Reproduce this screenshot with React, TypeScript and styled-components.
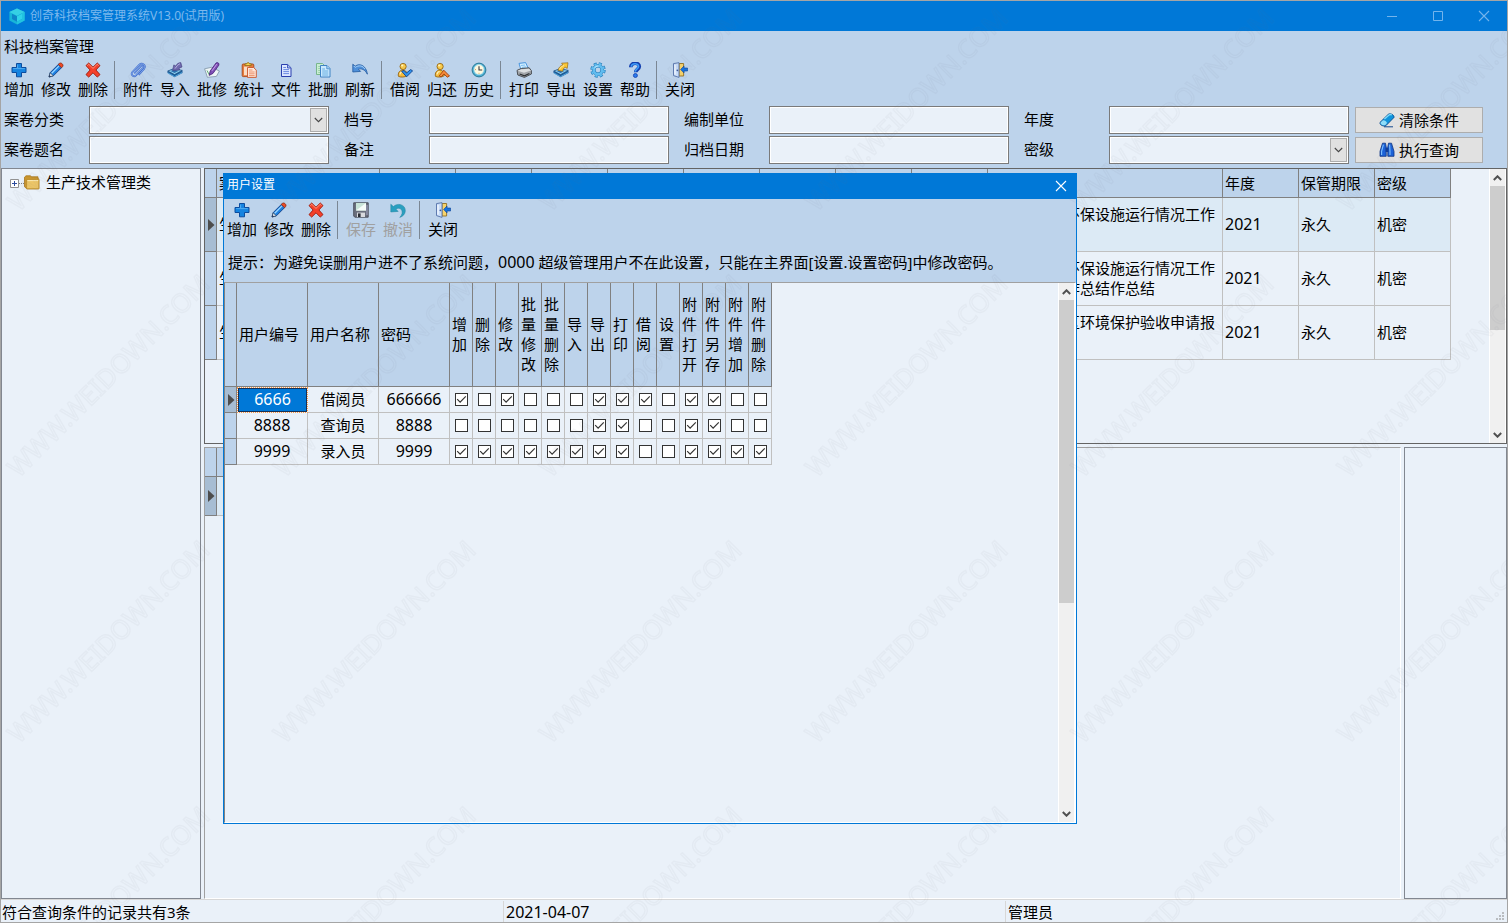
import React, { useId, useState } from "react";
import styled, { createGlobalStyle, css } from "styled-components";

const GlobalStyle = createGlobalStyle`
  *, *::before, *::after { box-sizing: border-box; }
  body { margin: 0; background: #eaf1f9; }
  body, button, input, select {
    font-family: "Noto Sans", "Noto Sans CJK SC", sans-serif;
    font-size: 15px;
    line-height: 20px;
    color: #000;
  }
`;

const color = {
  blue: "#0078d7",
  band: "#bdd3eb",
  panel: "#eaf1f9",
  line: "#808080",
  softLine: "#c0c0c0",
  current: "#dceaf5",
  currentHead: "#a7bdd3",
};

/* ---------- window frame ---------- */

const Window = styled.div`
  position: relative;
  display: flex;
  flex-direction: column;
  min-height: 100vh;
  border: 1px solid #a5a5a5;
  background: ${color.panel};
  overflow: hidden;
`;

const TitleBar = styled.header`
  display: flex;
  align-items: center;
  height: 30px;
  padding-left: 8px;
  gap: 5px;
  background: ${color.blue};
`;

const Title = styled.h1`
  flex: 1;
  margin: 0;
  font-size: 12px;
  font-weight: 400;
  line-height: 20px;
  color: #7db9ed;
`;

const CaptionButtons = styled.div`
  display: flex;
`;

const CaptionButton = styled.button<{ $bright?: boolean }>`
  display: flex;
  align-items: center;
  justify-content: center;
  width: ${(p) => (p.$bright ? "30px" : "46px")};
  height: 24px;
  padding: 0;
  border: 0;
  background: none;
  color: ${(p) => (p.$bright ? "#fff" : "#73b4ec")};
`;

const Band = styled.div`
  background: ${color.band};
`;

const MenuLine = styled.div`
  padding: 5px 3px 3px;
`;

/* ---------- tool bar ---------- */

const ToolBar = styled.div`
  display: flex;
  height: 42px;
`;

const ToolButton = styled.button`
  display: flex;
  flex-direction: column;
  align-items: center;
  gap: 1px;
  width: 37px;
  padding: 3px 1px 0 0;
  border: 0;
  background: none;
  white-space: nowrap;

  &:disabled {
    color: #a0a0a0;
  }
`;

const ToolSeparator = styled.div`
  width: 8px;
  flex: none;

  &::before {
    content: "";
    display: block;
    width: 1px;
    height: 38px;
    margin: 2px 0 0 2px;
    background: #7b8794;
  }
`;

/* ---------- query form ---------- */

const QueryForm = styled.form`
  display: flex;
  gap: 6px;
  padding: 5px 24px 4px 3px;
`;

const FieldGrid = styled.div`
  flex: 1;
  display: grid;
  grid-template-columns: repeat(4, minmax(0, 1fr));
  column-gap: 15px;
  row-gap: 2px;
`;

const Field = styled.div`
  display: flex;
  align-items: center;
`;

const FieldLabel = styled.label`
  flex: none;
  width: 85px;
  padding-bottom: 2px;
`;

const boxStyle = css`
  width: 100%;
  min-width: 0;
  height: 28px;
  padding: 0 4px;
  border: 1px solid #7a7a7a;
  border-radius: 0;
  background: ${color.panel};
  box-shadow: inset 0 0 0 1px #fff;
  outline: none;
`;

const TextBox = styled.input`
  ${boxStyle}
`;

const SelectFrame = styled.div`
  position: relative;
  flex: 1;
  min-width: 0;
  display: flex;
`;

const SelectBox = styled.select`
  ${boxStyle}
  appearance: none;
`;

const DropMark = styled.span`
  position: absolute;
  top: 2px;
  right: 2px;
  display: flex;
  align-items: center;
  justify-content: center;
  width: 17px;
  height: 24px;
  border: 1px solid #adadad;
  background: #e1e1e1;
  pointer-events: none;
`;

const FormButtons = styled.div`
  display: flex;
  flex-direction: column;
  gap: 4px;
  padding-top: 1px;
`;

const FormButton = styled.button`
  display: flex;
  align-items: center;
  justify-content: center;
  gap: 4px;
  width: 128px;
  height: 26px;
  padding: 0;
  border: 1px solid #adadad;
  background: #e1e1e1;
`;

/* ---------- work area ---------- */

const Work = styled.main`
  flex: 1;
  display: grid;
  grid-template-columns: 200px minmax(0, 1fr);
  gap: 3px;
`;

const TreePanel = styled.nav`
  padding: 3px 8px;
  border: 1px solid #828790;
`;

const TreeItem = styled.div`
  display: flex;
  align-items: center;
`;

const TreeLabel = styled.span`
  padding: 0 0 2px 6px;
`;

const Expander = styled.button`
  width: 9px;
  height: 9px;
  padding: 0;
  border: 0;
  background: none;
  display: flex;
`;

const Dots = styled.span`
  width: 5px;
  border-top: 1px dotted #808080;
`;

const Right = styled.div`
  display: flex;
  flex-direction: column;
  gap: 3px;
`;

const RecordPanel = styled.section`
  display: flex;
  height: 276px;
  border: 1px solid #646464;
`;

const LowerRow = styled.div`
  flex: 1;
  display: flex;
  gap: 3px;
`;

const DetailPanel = styled.section`
  flex: 1;
  min-width: 0;
  overflow: hidden;
  border: 1px solid #fff;
  border-top-color: #a0a0a0;
  border-left-color: #a0a0a0;
`;

const PreviewPanel = styled.aside`
  width: 103px;
  border: 1px solid #828790;
`;

const GridScroll = styled.div`
  flex: 1;
  min-width: 0;
  overflow: hidden;
`;

/* ---------- data grids ---------- */

const DataGrid = styled.table<{ $width: number }>`
  width: ${(p) => p.$width}px;
  table-layout: fixed;
  border-collapse: separate;
  border-spacing: 0;
`;

const HeadCell = styled.th<{ $height: number }>`
  height: ${(p) => p.$height}px;
  padding: 0 0 1px 2px;
  border-right: 1px solid ${color.line};
  border-bottom: 1px solid ${color.line};
  background: ${color.band};
  font-weight: 400;
  text-align: left;
  overflow: hidden;
`;

const MarkCell = styled.th<{ $current?: boolean }>`
  padding: 0 1px 0 0;
  border-right: 1px solid ${color.line};
  border-bottom: 1px solid ${color.line};
  background: ${(p) => (p.$current ? color.currentHead : color.band)};
  text-align: right;
  line-height: 0;
`;

const Cell = styled.td<{
  $height: number;
  $center?: boolean;
  $numeric?: boolean;
  $current?: boolean;
  $selected?: boolean;
}>`
  height: ${(p) => p.$height}px;
  padding: ${(p) => (p.$center ? "0 0 2px" : "0 0 2px 2px")};
  border-right: 1px solid ${color.softLine};
  border-bottom: 1px solid ${color.softLine};
  background: ${(p) => (p.$current ? color.current : color.panel)};
  text-align: ${(p) => (p.$center ? "center" : "left")};
  font-size: ${(p) => (p.$numeric ? "16px" : "15px")};
  ${(p) =>
    p.$selected &&
    css`
      background: ${color.blue};
      color: #fff;
      border: 1px dotted #ff9a45;
      background-clip: padding-box;
      background-color: ${color.blue};
      box-shadow: inset 0 0 0 1px #15325a;
    `}
`;

const TickCell = styled.td`
  height: 26px;
  padding: 0 0 0 5px;
  border-right: 1px solid ${color.softLine};
  border-bottom: 1px solid ${color.softLine};
`;

const Stacked = styled.span`
  display: block;
  width: 15px;
  word-break: break-all;
`;

const Tick = styled.input`
  appearance: none;
  display: block;
  width: 13px;
  height: 13px;
  margin: 0;
  border: 1px solid #333;
  background: #fff center / 11px 11px no-repeat;

  &:checked {
    background-image: url("data:image/svg+xml,%3Csvg xmlns='http://www.w3.org/2000/svg' viewBox='0 0 11 11'%3E%3Cpath d='M1.2 5.2L4.1 8.1L9.8 2.4' fill='none' stroke='%23333' stroke-width='1.2'/%3E%3C/svg%3E");
  }
`;

/* ---------- scroll bar ---------- */

const ScrollTrack = styled.div`
  display: flex;
  flex-direction: column;
  flex: none;
  width: 17px;
  border-left: 1px solid #fff;
  border-right: 1px solid #fff;
  background: #f0f0f0;
`;

const ScrollButton = styled.button`
  display: flex;
  align-items: center;
  justify-content: center;
  height: 17px;
  padding: 0;
  border: 0;
  background: none;
`;

const ScrollLane = styled.div`
  flex: 1;
`;

const ScrollThumb = styled.div`
  height: 60%;
  background: #cdcdcd;
`;

/* ---------- dialog ---------- */

const Dialog = styled.div`
  position: absolute;
  top: 172px;
  left: 222px;
  display: flex;
  flex-direction: column;
  width: 854px;
  border: 1px solid ${color.blue};
  background: ${color.band};
`;

const DialogTitle = styled.div`
  display: flex;
  align-items: flex-start;
  justify-content: space-between;
  height: 25px;
  padding-left: 3px;
  background: ${color.blue};
  color: #fff;
`;

const DialogName = styled.h2`
  margin: 0;
  font-size: 12px;
  font-weight: 400;
  line-height: 22px;
`;

const Hint = styled.p`
  margin: 0;
  padding: 11px 4px 10px;
`;

const Digits = styled.span`
  font-size: 16px;
`;

const DialogBody = styled.div`
  display: flex;
  height: 541px;
  border: 1px solid #fff;
  border-top-color: #a0a0a0;
  border-left-color: #828282;
  background: ${color.panel};
`;

/* ---------- status bar ---------- */

const StatusBar = styled.footer`
  display: grid;
  grid-template-columns: repeat(3, minmax(0, 1fr));
  height: 23px;
  padding-top: 1px;
  border-top: 1px solid #d7d7d7;
  background: ${color.panel};
`;

const StatusCell = styled.div<{ $numeric?: boolean }>`
  display: flex;
  justify-content: space-between;
  align-items: flex-start;
  padding: 1px 0 0 2px;
  border-left: 1px solid #d7d7d7;
  font-size: ${(p) => (p.$numeric ? "16px" : "15px")};

  &:first-child {
    padding-left: 1px;
    border-left: 0;
  }
`;

const WatermarkLayer = styled.svg`
  position: absolute;
  inset: 0;
  width: 100%;
  height: 100%;
  pointer-events: none;
`;

/* ---------- icons ---------- */

type IconName =
  | "add" | "edit" | "remove" | "clip" | "import" | "batchEdit" | "stats" | "file"
  | "batchRemove" | "refresh" | "lend" | "giveBack" | "history" | "print" | "export"
  | "settings" | "help" | "exit" | "save" | "undo" | "eraser" | "find" | "folder";

const Tray = () => (
  <>
    <path d="M.5 9L7 6.5L15.5 8.5V11L7.5 15.2L.5 11Z" fill="#1d5f9c" />
    <path d="M.8 9L7 6.6L15.2 8.4L7.6 12.6Z" fill="#8fd0ee" stroke="#1c4c82" strokeWidth=".7" />
    <path d="M3.5 9.1L7 7.8L11.8 8.8L7.6 11Z" fill="#2c6fae" />
    <path d="M1 11L7.6 14.6L15 10.6" fill="none" stroke="#5fb4e6" strokeWidth=".8" />
  </>
);

const Person = () => (
  <>
    <path d="M1.5 14.4C.6 11 2.6 8.3 5.6 8.1C8.8 8 10.6 10.8 10.2 13.8C8 15.3 3.6 15.4 1.5 14.4Z" fill="#f5bb3c" stroke="#96650f" strokeWidth=".9" />
    <path d="M3 12.5C3.2 10.8 4.2 9.7 5.6 9.5" stroke="#fff0b8" strokeWidth="1.1" fill="none" />
    <circle cx="6.1" cy="4.5" r="3.1" fill="#f9cb4c" stroke="#96650f" strokeWidth=".9" />
    <circle cx="5.2" cy="3.5" r="1.1" fill="#fff3c0" />
  </>
);

const icons: Record<IconName, React.ReactNode> = {
  add: (
    <>
      <path d="M5.5 1.5H10.5V5.5H15V10.5H10.5V14.8H5.5V10.5H1V5.5H5.5Z" fill="#1583e0" stroke="#0c4c9e" />
      <path d="M6.6 2.6V6.6H2.2M6.6 6.6H13.8" fill="none" stroke="#4fadf2" strokeWidth="1" />
    </>
  ),
  edit: (
    <>
      <path d="M1 15L2.2 10.6L10.8 2L14 5.2L5.4 13.8Z" fill="#1d7fe0" stroke="#123f86" strokeWidth=".9" />
      <path d="M3.2 10.8L10.6 3.4L11.5 4.3L4.2 11.7Z" fill="#9bd6ff" />
      <path d="M10.3 2.5L11.9 1C13.4 .6 15.4 2.4 15 4.1L13.5 5.7Z" fill="#ef4a23" stroke="#93270f" strokeWidth=".8" />
      <path d="M1 15L2.2 10.8L5.2 13.8Z" fill="#e9eef6" stroke="#345" strokeWidth=".7" />
      <path d="M1 15L1.5 13L3 14.4Z" fill="#1b2c52" />
    </>
  ),
  remove: (
    <>
      <path d="M1 3.6L3.7 1L8 5.2L12.3 1L15 3.6L10.9 8L15 12.6L12.3 15.1L8 10.8L3.7 15.1L1 12.6L5.1 8Z" fill="#f4402a" stroke="#9c1708" strokeWidth=".9" />
      <path d="M2.3 3.6L3.8 2.3L8 6.4L12.2 2.3L13.7 3.5" fill="none" stroke="#ffa58d" strokeWidth=".8" />
    </>
  ),
  clip: (
    <>
      <path d="M4.2 11.4L10.8 4.3C12.2 2.9 14 4.5 12.8 6L6 13.3C3.8 15.5 .3 12.8 2.4 10L9.2 2.8C12 .2 16.4 3 14.2 6.6L8.6 12.8" fill="none" stroke="#3f6fd0" strokeWidth="1.8" />
      <path d="M4.2 11.4L10.8 4.3C12.2 2.9 14 4.5 12.8 6L6 13.3C3.8 15.5 .3 12.8 2.4 10L9.2 2.8C12 .2 16.4 3 14.2 6.6L8.6 12.8" fill="none" stroke="#a8c4f6" strokeWidth=".6" />
    </>
  ),
  import: (
    <>
      <Tray />
      <path d="M13.8 .6L15 5L12 6.2L12.6 8L5.6 8.4L6.8 2.9L8.8 4.1C9.6 2 11.4 .8 13.8 .6Z" fill="#6f69ad" stroke="#413d7a" strokeWidth=".6" />
      <path d="M8 6.6L10.6 3.2L13 1.7" stroke="#b5b0de" fill="none" />
    </>
  ),
  batchEdit: (
    <>
      <path d="M.6 6.8L7.6 5.3L15.4 9L12.4 14.4L3.4 15.3Z" fill="#eef5f7" stroke="#7d93a4" strokeWidth=".8" />
      <path d="M3 8.5L5.2 12.6L7 9.4" fill="none" stroke="#61b273" strokeWidth="1" />
      <path d="M5.2 13.4L6.2 9L12 1C13.6 -.1 15.6 1.3 14.8 3.2L9 11.4Z" fill="#7f4fb6" stroke="#492379" strokeWidth=".8" />
      <path d="M8 8.8L12.8 2.2" stroke="#c9a3ea" />
    </>
  ),
  stats: (
    <>
      <rect x="1.2" y="2" width="11.6" height="12.6" rx="1" fill="#e87d3d" stroke="#a8481a" strokeWidth=".9" />
      <path d="M4 3.6V1.8H5.8C6 .2 8.2 .2 8.4 1.8H10.2V3.6Z" fill="#f8d451" stroke="#8c6611" strokeWidth=".8" />
      <rect x="3" y="4.6" width="5" height="8.6" fill="#fbdcc4" />
      <path d="M6.5 5.5H12.6L15.3 8.2V15.4H6.5Z" fill="#ffe6d8" stroke="#c9552a" strokeWidth=".9" />
      <path d="M8 8H11.5M8 10H13.6M8 11.8H13.6M8 13.6H13.6" stroke="#ea8a63" strokeWidth=".9" />
    </>
  ),
  file: (
    <>
      <path d="M3.5 2.5H9.7L13 5.8V14.5H3.5Z" fill="#dbe6ff" stroke="#2a3fae" />
      <path d="M9.5 2.8V6H12.8" fill="#a9bff5" stroke="#2a3fae" strokeWidth=".8" />
      <path d="M5.3 5.5H8M5.3 7.6H11M5.3 9.6H11M5.3 11.6H11" stroke="#6c8ae2" />
    </>
  ),
  batchRemove: (
    <>
      <path d="M1.5 1.5H7.5L10.3 4.3V12.5H1.5Z" fill="#c9edd3" stroke="#78b68c" />
      <path d="M3.2 4.5H5.4M3.2 6.5H5.4M3.2 8.5H5.4M3.2 10.5H5.4" stroke="#9ad0a9" />
      <path d="M5.5 3.5H12L15 6.5V15H5.5Z" fill="#cbe9ff" stroke="#3f83c4" />
      <path d="M11.8 3.8V6.8H14.8" fill="#a6d4f6" stroke="#3f83c4" strokeWidth=".8" />
      <path d="M7.2 7H10M7.2 9H13.3M7.2 11H13.3M7.2 13H13.3" stroke="#67aee0" />
    </>
  ),
  refresh: (
    <>
      <path d="M.8 2.2L3.2 4.2C7.4 .8 14.2 3.2 15.4 12.2C12.8 7.4 9.4 6.2 6.4 7.2L8.6 9.4L.8 10Z" fill="#4f90da" stroke="#235a9f" strokeWidth=".8" />
      <path d="M1.8 4L3.2 5.4C6.5 2.9 11 3.6 13 7" stroke="#a7d1f8" fill="none" />
    </>
  ),
  lend: (
    <>
      <Person />
      <path d="M4.6 9.3L7 8.5L9.5 11L13.6 7.6L15.6 8.8L9.6 14.8Z" fill="#2e93ef" stroke="#0c418f" strokeWidth=".9" />
    </>
  ),
  giveBack: (
    <>
      <Person />
      <path d="M5.2 13.8L9.8 8.2L15.5 14L13.3 15.2L9.9 11.9L7.2 15Z" fill="#f78b3a" stroke="#9f400d" strokeWidth=".9" />
    </>
  ),
  history: (
    <>
      <circle cx="8" cy="8" r="6.9" fill="#4eafd2" stroke="#257391" strokeWidth=".9" />
      <circle cx="8" cy="7.6" r="5" fill="#fff9df" stroke="#a5dced" strokeWidth=".8" />
      <path d="M8 4.2V8H11.2" stroke="#38383c" strokeWidth="1.1" fill="none" />
      <path d="M4.2 7.6H5M7.6 11.3H8.4" stroke="#c69440" />
    </>
  ),
  print: (
    <>
      <path d="M3 1.4L9.6 .6L12.5 6.8L5 8Z" fill="#d4efff" stroke="#3b8cdb" strokeWidth=".9" />
      <path d="M5 3.5L9 3M6 5.4L10.2 4.8" stroke="#7fc2f4" />
      <path d="M1 8.4L5.2 6.5L13.2 5.8L15.4 8.7V12L8.4 15.4L1.8 13Z" fill="#a2a6aa" stroke="#3f4347" strokeWidth=".9" />
      <path d="M1.5 8.7L8 10.8L15 8.6L12.8 6.8L5.4 7.3Z" fill="#dcdfe1" />
      <path d="M3.6 12L8.4 13.8L13.4 11.5" stroke="#2b2e31" strokeWidth="1.2" fill="none" />
    </>
  ),
  export: (
    <>
      <Tray />
      <path d="M8.6 1.2L15 .8L14.2 6.4L12.2 5.2C10.6 6 10 7.4 9.6 9.2L5 8.4C5.6 5.6 7.6 3.4 9.9 2.9Z" fill="#fbc736" stroke="#966814" strokeWidth=".7" />
      <path d="M6.6 7.4C7.4 5.2 9 4.2 11 3.6" stroke="#ffeaa0" fill="none" />
    </>
  ),
  settings: (
    <>
      <circle cx="8" cy="8" r="6.2" fill="none" stroke="#2a7fb9" strokeWidth="3" strokeDasharray="2.9 1.97" />
      <circle cx="8" cy="8" r="4.2" fill="none" stroke="#2a7fb9" strokeWidth="3.6" />
      <circle cx="8" cy="8" r="4.2" fill="none" stroke="#62bdf0" strokeWidth="2.6" />
      <circle cx="8" cy="8" r="6" fill="none" stroke="#62bdf0" strokeWidth="2" strokeDasharray="2.1 2.61" strokeDashoffset="-.4" />
      <path d="M4.3 6.4C5 4.8 6.6 3.9 8.4 4" fill="none" stroke="#c3e9fc" />
    </>
  ),
  help: (
    <>
      <path d="M3.8 5.3C3.6 -.1 12.5 .1 12.3 4.6C12.2 7.2 8.7 7.4 8.7 10.3" fill="none" stroke="#123eae" strokeWidth="3.6" />
      <path d="M4.3 4.7C4.5 .8 11.7 .9 11.6 4.6C11.5 6.9 8.2 7 8.2 9.8" fill="none" stroke="#3f9cf8" strokeWidth="1.6" />
      <circle cx="8.4" cy="13.5" r="2" fill="#2a7bec" stroke="#123eae" strokeWidth=".8" />
    </>
  ),
  exit: (
    <>
      <path d="M7 1.5H11.6V14H7Z" fill="#f7d36b" stroke="#94711f" strokeWidth=".9" />
      <path d="M1.5 1.6L7 .7V15.4L1.5 13.6Z" fill="#c8dcf8" stroke="#5470a8" strokeWidth=".9" />
      <path d="M3 3V12.6" stroke="#fff" />
      <circle cx="5.4" cy="8.3" r=".9" fill="#3d5a96" />
      <path d="M8.6 7.4L12 4V6H15.6V9H12V10.9Z" fill="#1673df" stroke="#0b4194" strokeWidth=".6" />
    </>
  ),
  save: (
    <>
      <path d="M.7 .8H15.2V15.2H1.8L.7 14Z" fill="#6a6f7d" stroke="#474b57" strokeWidth=".9" />
      <rect x="3" y="1" width="10" height="7.6" fill="#c9e4d8" />
      <path d="M3 8.4L13 1V8.6H3Z" fill="#f7fcf9" />
      <rect x="4" y="10.6" width="8" height="4.4" fill="#d8dade" />
      <rect x="5" y="11.4" width="2.6" height="3.6" fill="#292c34" />
      <path d="M14 3V13" stroke="#a4a7c4" />
    </>
  ),
  undo: (
    <path d="M.8 2.2L3.4 4.6C7 .6 15.6 2 15.3 9C15.2 12 13 14.4 9.8 15.4C12.2 12.6 12.6 10.4 11.8 8.4C10.8 6.2 8 5.6 6 7.2L8.2 9.4L.8 10Z" fill="#2a9fc0" stroke="#23859f" strokeWidth=".5" />
  ),
  eraser: (
    <>
      <path d="M5 14.8H14" stroke="#15498d" />
      <path d="M1 10.4L9.2 2.4C10.8 .9 15.4 2.6 15 5.4L7 13.6C4.8 14.9 .4 13 1 10.4Z" fill="#0f93dc" stroke="#0c4a8a" strokeWidth=".9" />
      <path d="M1.6 10.4L4 8.2C5.6 8 7.6 9.4 8 11L6.4 13C4.6 14.1 1.2 12.6 1.6 10.4Z" fill="#8fdcf8" />
      <path d="M5.4 6.9L10 2.9C10.8 2.3 12 2.5 12.8 3" stroke="#7fdcfb" strokeWidth="1.3" fill="none" />
    </>
  ),
  find: (
    <>
      <path d="M3.5 1.2H6.5L7.2 5V14.3H1V9.4Z" fill="#1c62d8" stroke="#0c3482" strokeWidth=".8" />
      <path d="M9.5 1.2H12.5L15 9.4V14.3H8.8V5Z" fill="#1c62d8" stroke="#0c3482" strokeWidth=".8" />
      <rect x="6.6" y="5.6" width="2.8" height="4.4" fill="#0d3c99" />
      <path d="M4.4 2.6L2.6 9.4V13M10.6 2.6L11 9.4V13" stroke="#7fc2ff" strokeWidth="1.1" fill="none" />
    </>
  ),
  folder: (
    <>
      <path d="M.5 2.2V11.8L3 13.8H14.8V3.8H14V1.8H7.5L6.5 .8H2Z" fill="#c9962f" stroke="#a9761c" strokeWidth=".8" />
      <path d="M2.6 4.6H14.9V13.8H2.6Z" fill="#ecc566" stroke="#b98b2b" strokeWidth=".8" />
      <path d="M3.4 5.6H14.2" stroke="#fbeab4" />
    </>
  ),
};

const IconSvg = styled.svg`
  display: block;
  flex: none;
`;

const Icon = ({ name }: { name: IconName }) => (
  <IconSvg width="16" height="16" viewBox="0 0 16 16" aria-hidden="true">
    {icons[name]}
  </IconSvg>
);

const Logo = () => (
  <IconSvg width="16" height="17" viewBox="0 0 16 17" aria-hidden="true">
    <path d="M8 .4L15.6 4.1V12.6L8 16.6L.4 12.6V4.1Z" fill="#18b4d8" />
    <path d="M8 .4L15.6 4.1L8 7.8L.4 4.1Z" fill="#35d0e4" />
    <path d="M8 7.8L15.6 4.1V12.6L8 16.6Z" fill="#22c3e0" />
    <path d="M3 5.7L8 8.2L13 5.7V11L8 13.8L3 11Z" fill="#0e86c8" />
    <path d="M8 8.2L13 5.7V11L8 13.8Z" fill="#2fd3ea" />
  </IconSvg>
);

const Cross = () => (
  <IconSvg width="12" height="12" viewBox="0 0 12 12" aria-hidden="true">
    <path d="M1 1L11 11M11 1L1 11" stroke="currentColor" strokeWidth="1.1" />
  </IconSvg>
);

const Chevron = ({ up, bold }: { up?: boolean; bold?: boolean }) => (
  <IconSvg width="9" height="6" viewBox="0 0 9 6" aria-hidden="true">
    <path
      d={up ? "M.8 5L4.5 1.3L8.2 5" : "M.8 1L4.5 4.7L8.2 1"}
      fill="none"
      stroke={bold ? "#505050" : "#444"}
      strokeWidth={bold ? 2 : 1.1}
    />
  </IconSvg>
);

const RowMark = () => (
  <svg width="7" height="12" viewBox="0 0 7 12" aria-hidden="true">
    <path d="M0 0L6.5 6L0 12Z" fill="#4d4d4d" />
  </svg>
);

/* ---------- shared parts ---------- */

const ScrollBar = () => (
  <ScrollTrack>
    <ScrollButton type="button" aria-label="向上滚动"><Chevron up bold /></ScrollButton>
    <ScrollLane><ScrollThumb /></ScrollLane>
    <ScrollButton type="button" aria-label="向下滚动"><Chevron bold /></ScrollButton>
  </ScrollTrack>
);

type Tool = { icon: IconName; label: string; disabled?: boolean };

const Tools = ({ groups }: { groups: Tool[][] }) => (
  <ToolBar role="toolbar">
    {groups.map((group, i) => (
      <React.Fragment key={i}>
        {i > 0 && <ToolSeparator />}
        {group.map((tool) => (
          <ToolButton key={tool.label} type="button" disabled={tool.disabled}>
            <Icon name={tool.icon} />
            {tool.label}
          </ToolButton>
        ))}
      </React.Fragment>
    ))}
  </ToolBar>
);

const mainTools: Tool[][] = [
  [
    { icon: "add", label: "增加" },
    { icon: "edit", label: "修改" },
    { icon: "remove", label: "删除" },
  ],
  [
    { icon: "clip", label: "附件" },
    { icon: "import", label: "导入" },
    { icon: "batchEdit", label: "批修" },
    { icon: "stats", label: "统计" },
    { icon: "file", label: "文件" },
    { icon: "batchRemove", label: "批删" },
    { icon: "refresh", label: "刷新" },
  ],
  [
    { icon: "lend", label: "借阅" },
    { icon: "giveBack", label: "归还" },
    { icon: "history", label: "历史" },
  ],
  [
    { icon: "print", label: "打印" },
    { icon: "export", label: "导出" },
    { icon: "settings", label: "设置" },
    { icon: "help", label: "帮助" },
  ],
  [{ icon: "exit", label: "关闭" }],
];

const dialogTools: Tool[][] = [
  [
    { icon: "add", label: "增加" },
    { icon: "edit", label: "修改" },
    { icon: "remove", label: "删除" },
  ],
  [
    { icon: "save", label: "保存", disabled: true },
    { icon: "undo", label: "撤消", disabled: true },
  ],
  [{ icon: "exit", label: "关闭" }],
];

const fields = [
  { label: "案卷分类", select: true },
  { label: "档号" },
  { label: "编制单位" },
  { label: "年度" },
  { label: "案卷题名" },
  { label: "备注" },
  { label: "归档日期" },
  { label: "密级", select: true },
];

const QueryField = ({ label, select }: { label: string; select?: boolean }) => {
  const id = useId();
  return (
    <Field>
      <FieldLabel htmlFor={id}>{label}</FieldLabel>
      {select ? (
        <SelectFrame>
          <SelectBox id={id} defaultValue="">
            <option value="" />
          </SelectBox>
          <DropMark><Chevron /></DropMark>
        </SelectFrame>
      ) : (
        <TextBox id={id} type="text" />
      )}
    </Field>
  );
};

/* ---------- record list ---------- */

const recordColumns = [
  { label: "案卷分类", width: 163 },
  ...Array.from({ length: 8 }, () => ({ label: "", width: 76 })),
  { label: "", width: 235 },
  { label: "年度", width: 76 },
  { label: "保管期限", width: 76 },
  { label: "密级", width: 76 },
];

const records = [
  "某公司年度环保设施运行情况工作总结",
  "某公司年度环保设施运行情况工作总结作总结作总结作总结",
  "某公司新厂区环境保护验收申请报告",
];

const RecordGrid = () => (
  <DataGrid $width={1246}>
    <colgroup>
      <col width={12} />
      {recordColumns.map((c, i) => <col key={i} width={c.width} />)}
    </colgroup>
    <thead>
      <tr>
        <MarkCell />
        {recordColumns.map((c, i) => <HeadCell key={i} $height={29}>{c.label}</HeadCell>)}
      </tr>
    </thead>
    <tbody>
      {records.map((name, i) => {
        const cell = { $height: 54, $current: i === 0 };
        return (
          <tr key={name}>
            <MarkCell $current={i === 0}>{i === 0 && <RowMark />}</MarkCell>
            <Cell {...cell}>生产技术管理类</Cell>
            {Array.from({ length: 8 }, (_, n) => <Cell key={n} {...cell} />)}
            <Cell {...cell}>{name}</Cell>
            <Cell {...cell} $numeric>2021</Cell>
            <Cell {...cell}>永久</Cell>
            <Cell {...cell}>机密</Cell>
          </tr>
        );
      })}
    </tbody>
  </DataGrid>
);

const DetailGrid = () => (
  <DataGrid $width={175}>
    <colgroup>
      <col width={12} />
      <col width={163} />
    </colgroup>
    <thead>
      <tr>
        <MarkCell />
        <HeadCell $height={29} />
      </tr>
    </thead>
    <tbody>
      <tr>
        <MarkCell $current><RowMark /></MarkCell>
        <Cell $height={39} $current />
      </tr>
    </tbody>
  </DataGrid>
);

/* ---------- user rights dialog ---------- */

const rights = [
  "增加", "删除", "修改", "批量修改", "批量删除", "导入", "导出",
  "打印", "借阅", "设置", "附件打开", "附件另存", "附件增加", "附件删除",
];

const users = [
  { id: "6666", name: "借阅员", password: "666666", rights: "10100011101100" },
  { id: "8888", name: "查询员", password: "8888", rights: "00000011001100" },
  { id: "9999", name: "录入员", password: "9999", rights: "11111111001111" },
];

const UserDialog = ({ onClose }: { onClose: () => void }) => (
  <Dialog role="dialog" aria-labelledby="user-dialog-name">
    <DialogTitle>
      <DialogName id="user-dialog-name">用户设置</DialogName>
      <CaptionButton $bright type="button" aria-label="关闭" onClick={onClose}><Cross /></CaptionButton>
    </DialogTitle>
    <Tools groups={dialogTools} />
    <Hint>
      提示：为避免误删用户进不了系统问题，<Digits>0000</Digits> 超级管理用户不在此设置，只能在主界面[设置.设置密码]中修改密码。
    </Hint>
    <DialogBody>
      <GridScroll>
        <DataGrid $width={547}>
          <colgroup>
            <col width={12} />
            <col width={71} />
            <col width={71} />
            <col width={71} />
            {rights.map((r) => <col key={r} width={23} />)}
          </colgroup>
          <thead>
            <tr>
              <MarkCell />
              <HeadCell $height={104}>用户编号</HeadCell>
              <HeadCell $height={104}>用户名称</HeadCell>
              <HeadCell $height={104}>密码</HeadCell>
              {rights.map((r) => (
                <HeadCell key={r} $height={104}><Stacked>{r}</Stacked></HeadCell>
              ))}
            </tr>
          </thead>
          <tbody>
            {users.map((user, row) => (
              <tr key={user.id}>
                <MarkCell $current={row === 0}>{row === 0 && <RowMark />}</MarkCell>
                <Cell $height={26} $center $numeric $selected={row === 0}>{user.id}</Cell>
                <Cell $height={26} $center>{user.name}</Cell>
                <Cell $height={26} $center $numeric>{user.password}</Cell>
                {rights.map((r, i) => (
                  <TickCell key={r}>
                    <Tick
                      type="checkbox"
                      aria-label={`${user.name} ${r}`}
                      defaultChecked={user.rights[i] === "1"}
                    />
                  </TickCell>
                ))}
              </tr>
            ))}
          </tbody>
        </DataGrid>
      </GridScroll>
      <ScrollBar />
    </DialogBody>
  </Dialog>
);

/* Diagonal outline lettering repeated over the whole window. */
const Watermark = () => (
  <WatermarkLayer aria-hidden="true">
    <defs>
      <pattern id="mark" x="-26" y="-25" width="266" height="266" patternUnits="userSpaceOnUse">
        <text
          x="133"
          y="143"
          textAnchor="middle"
          transform="rotate(-45 133 133)"
          fontFamily="'Noto Sans', sans-serif"
          fontSize="26"
          fill="none"
          stroke="#5a6470"
          strokeOpacity=".05"
          strokeWidth="1.4"
        >
          WWW.WEIDOWN.COM
        </text>
      </pattern>
    </defs>
    <rect width="100%" height="100%" fill="url(#mark)" />
  </WatermarkLayer>
);

export default function App() {
  const [dialogOpen, setDialogOpen] = useState(true);

  return (
    <Window>
      <GlobalStyle />
      <TitleBar>
        <Logo />
        <Title>创奇科技档案管理系统V13.0(试用版)</Title>
        <CaptionButtons>
          <CaptionButton type="button" aria-label="最小化">
            <IconSvg width="10" height="10" viewBox="0 0 10 10"><path d="M0 5.5H10" stroke="currentColor" /></IconSvg>
          </CaptionButton>
          <CaptionButton type="button" aria-label="最大化">
            <IconSvg width="10" height="10" viewBox="0 0 10 10"><path d="M.5 .5H9.5V9.5H.5Z" fill="none" stroke="currentColor" /></IconSvg>
          </CaptionButton>
          <CaptionButton type="button" aria-label="关闭"><Cross /></CaptionButton>
        </CaptionButtons>
      </TitleBar>

      <Band>
        <MenuLine>科技档案管理</MenuLine>
        <Tools groups={mainTools} />
        <QueryForm onSubmit={(e) => e.preventDefault()}>
          <FieldGrid>
            {fields.map((f) => <QueryField key={f.label} {...f} />)}
          </FieldGrid>
          <FormButtons>
            <FormButton type="reset"><Icon name="eraser" />清除条件</FormButton>
            <FormButton type="submit"><Icon name="find" />执行查询</FormButton>
          </FormButtons>
        </QueryForm>
      </Band>

      <Work>
        <TreePanel>
          <TreeItem>
            <Expander type="button" aria-label="展开">
              <IconSvg width="9" height="9" viewBox="0 0 9 9">
                <path d="M.5 .5H8.5V8.5H.5Z" fill="#fff" stroke="#919191" />
                <path d="M2 4.5H7M4.5 2V7" stroke="#2b4a9c" />
              </IconSvg>
            </Expander>
            <Dots />
            <Icon name="folder" />
            <TreeLabel>生产技术管理类</TreeLabel>
          </TreeItem>
        </TreePanel>
        <Right>
          <RecordPanel>
            <GridScroll><RecordGrid /></GridScroll>
            <ScrollBar />
          </RecordPanel>
          <LowerRow>
            <DetailPanel><DetailGrid /></DetailPanel>
            <PreviewPanel />
          </LowerRow>
        </Right>
      </Work>

      <StatusBar>
        <StatusCell>符合查询条件的记录共有3条</StatusCell>
        <StatusCell $numeric>2021-04-07</StatusCell>
        <StatusCell>
          管理员
          <IconSvg width="12" height="20" viewBox="0 0 12 20" aria-hidden="true">
            <path d="M7 10h2v2h-2zM4 13h2v2h-2zM7 13h2v2h-2zM1 16h2v2h-2zM4 16h2v2h-2zM7 16h2v2h-2z" fill="#b9bcc0" />
          </IconSvg>
        </StatusCell>
      </StatusBar>

      {dialogOpen && <UserDialog onClose={() => setDialogOpen(false)} />}
      <Watermark />
    </Window>
  );
}
